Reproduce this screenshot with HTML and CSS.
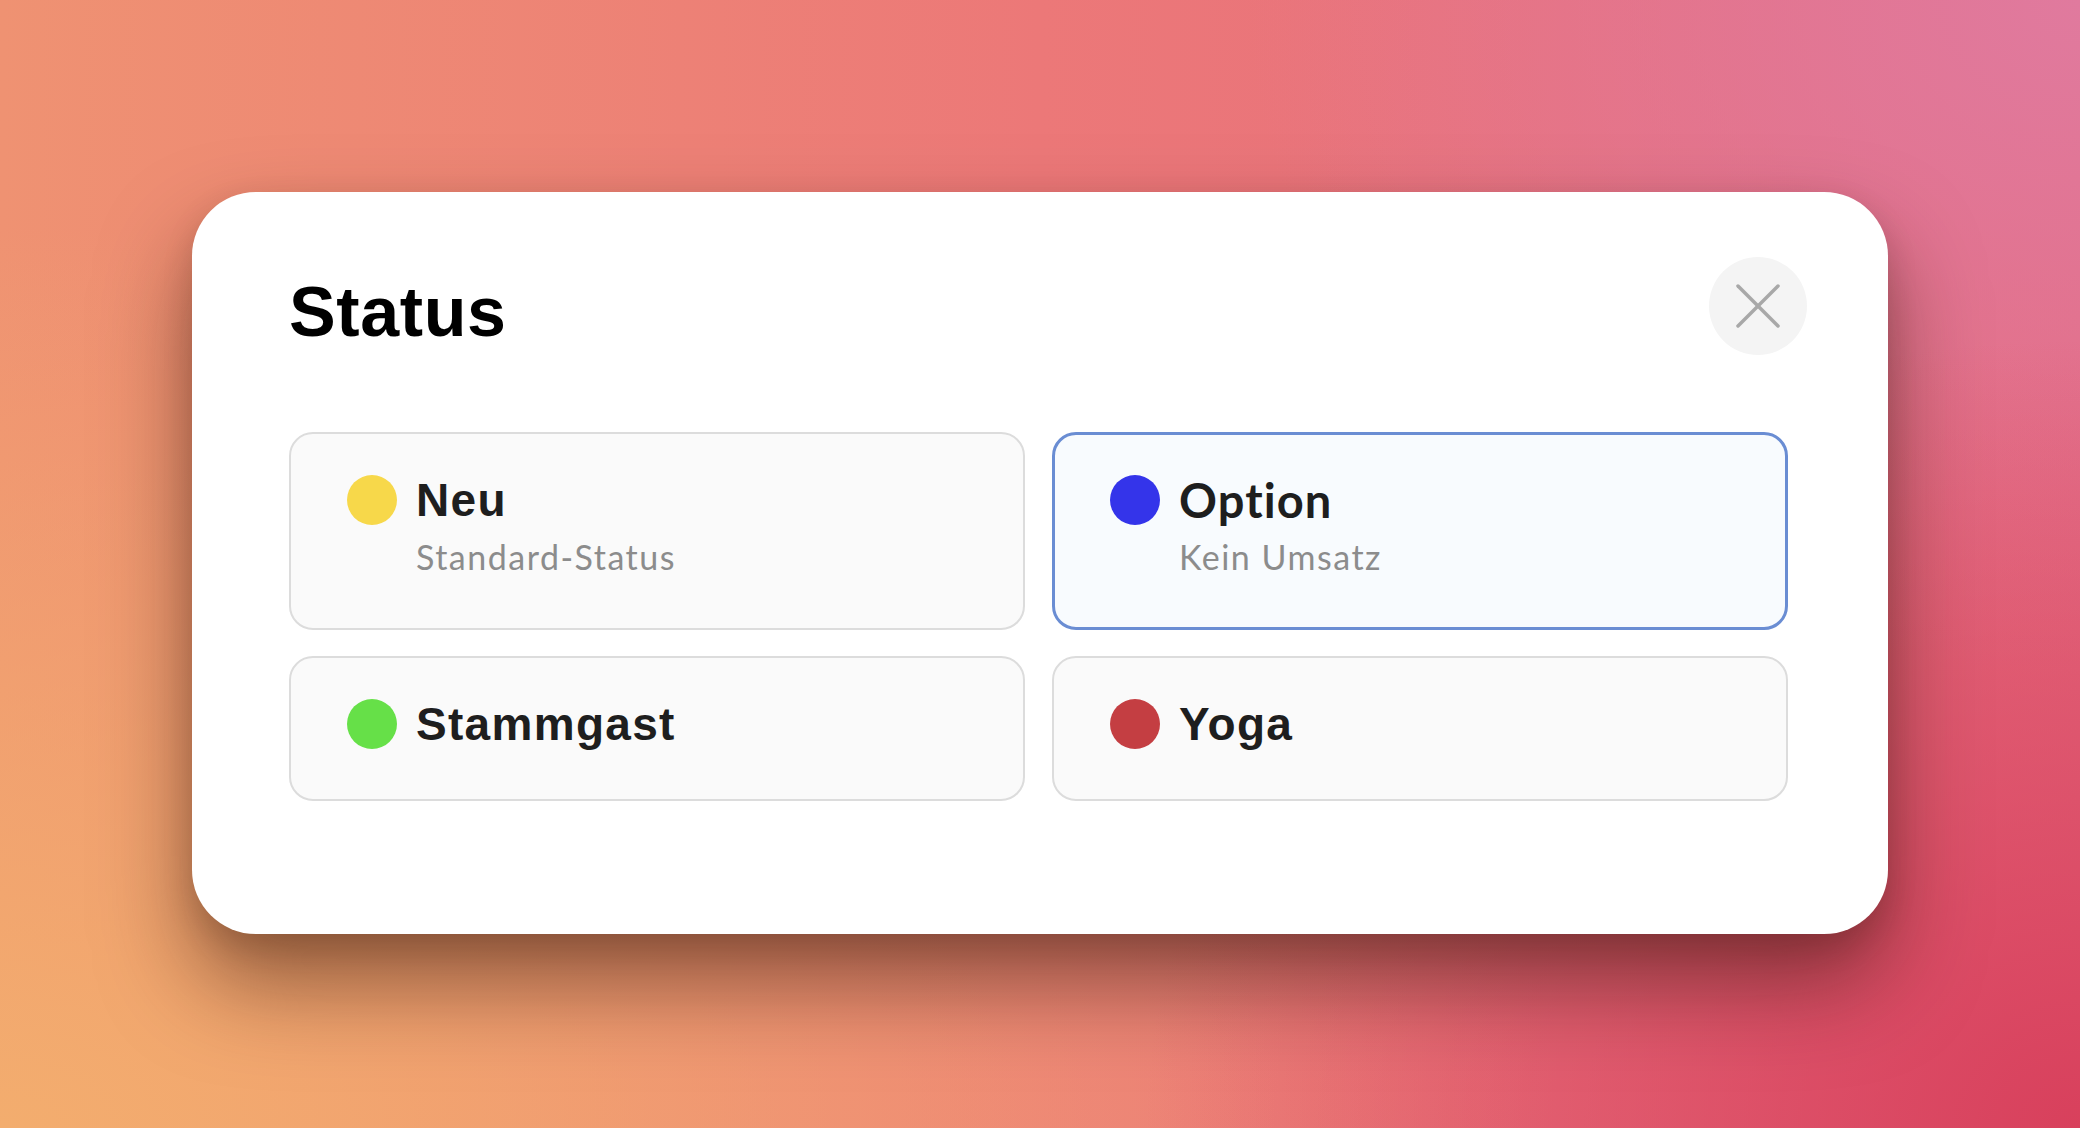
FILE: index.html
```html
<!DOCTYPE html>
<html lang="de">
<head>
<meta charset="UTF-8">
<meta name="viewport" content="width=device-width, initial-scale=1.0">
<title>Status</title>
<link rel="stylesheet" href="styles.css">
</head>
<body>
<div class="modal">
    <div class="modal-header">
        <h1 class="modal-title">Status</h1>
        <button type="button" class="close-btn" aria-label="Schließen">
            <svg width="44" height="44" viewBox="0 0 44 44">
                <line x1="2" y1="2" x2="42" y2="42" />
                <line x1="42" y1="2" x2="2" y2="42" />
            </svg>
        </button>
    </div>

    <div class="status-grid">
        <div class="status-card">
            <div class="status-head">
                <span class="dot dot-yellow"></span>
                <span class="status-name">Neu</span>
            </div>
            <div class="status-sub">Standard-Status</div>
        </div>
        <div class="status-card selected">
            <div class="status-head">
                <span class="dot dot-blue"></span>
                <span class="status-name lato">Option</span>
            </div>
            <div class="status-sub">Kein Umsatz</div>
        </div>
        <div class="status-card">
            <div class="status-head">
                <span class="dot dot-green"></span>
                <span class="status-name">Stammgast</span>
            </div>
        </div>
        <div class="status-card">
            <div class="status-head">
                <span class="dot dot-red"></span>
                <span class="status-name">Yoga</span>
            </div>
        </div>
    </div>
</div>
</body>
</html>
```

FILE: styles.css
```css
html, body {
    margin: 0;
    height: 100%;
}

body {
    box-sizing: border-box;
    padding: 192px 0 0 192px;
    overflow: hidden;
    font-family: "Liberation Sans", Arial, sans-serif;
    background:
        radial-gradient(ellipse 45% 70% at 100% 100%, #d8405c 0%, rgba(216, 64, 92, 0) 100%),
        radial-gradient(ellipse 75% 80% at 0% 100%, #f3ad6e 0%, rgba(236, 150, 100, 0) 100%),
        radial-gradient(ellipse 40% 60% at 100% 0%, #e07a9e 0%, rgba(224, 122, 158, 0) 100%),
        linear-gradient(90deg, #ef9272 0%, #ec7878 50%, #e46b80 100%);
}

.modal {
    box-sizing: border-box;
    width: 1696px;
    padding: 64px 100px 133px 97px;
    background-color: #fff;
    border-radius: 64px;
    box-shadow: 0 50px 90px rgba(50, 20, 10, 0.5), 0 12px 30px rgba(50, 20, 10, 0.15);
}

.modal-header {
    display: flex;
    justify-content: space-between;
    align-items: flex-start;
}

.modal-title {
    margin: 21px 0 0 0;
    font-size: 70px;
    line-height: 70px;
    font-weight: bold;
    letter-spacing: 0.6px;
    color: #000;
}

.close-btn {
    width: 98px;
    height: 98px;
    margin: 1px -19px 0 0;
    padding: 0;
    border: none;
    border-radius: 50%;
    background-color: #f4f4f4;
    display: flex;
    align-items: center;
    justify-content: center;
    cursor: pointer;
}

.close-btn line {
    stroke: #a8a8a8;
    stroke-width: 3.5;
    stroke-linecap: round;
}

.status-grid {
    display: grid;
    grid-template-columns: 1fr 1fr;
    column-gap: 27px;
    row-gap: 26px;
    margin-top: 77px;
}

.status-card {
    padding: 38px 56px 47px 56px;
    background-color: #fafafa;
    border: 2px solid #dcdcdc;
    border-radius: 24px;
}

.status-card.selected {
    padding: 37px 55px 46px 55px;
    background-color: #f8fbfe;
    border: 3px solid #6a8dd3;
}

.status-head {
    display: flex;
    align-items: center;
    gap: 19px;
}

.dot {
    width: 50px;
    height: 50px;
    border-radius: 50%;
    flex-shrink: 0;
}

.dot-yellow { background-color: #f7d84a; }
.dot-blue { background-color: #3434ea; }
.dot-green { background-color: #66e048; }
.dot-red { background-color: #c43e42; }

.status-name {
    font-size: 46px;
    line-height: 56px;
    font-weight: bold;
    letter-spacing: 1.3px;
    color: #1e1e1e;
}

.status-name.lato {
    font-family: Lato, "Liberation Sans", sans-serif;
    font-size: 47px;
    letter-spacing: 1.1px;
}

.status-sub {
    margin: 7px 0 2px 69px;
    font-family: Lato, "Liberation Sans", sans-serif;
    font-size: 34px;
    line-height: 44px;
    letter-spacing: 1.5px;
    color: #8c8c8c;
}
```
